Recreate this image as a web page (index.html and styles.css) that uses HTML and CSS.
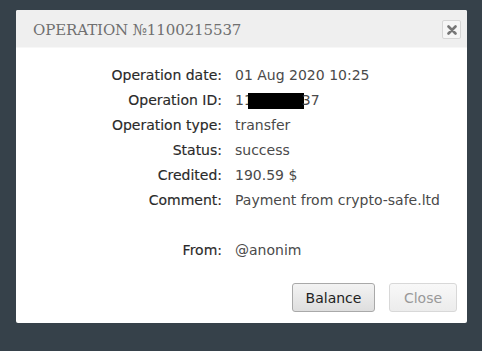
FILE: index.html
```html
<!DOCTYPE html>
<html>
<head>
<meta charset="utf-8">
<link rel="stylesheet" href="styles.css">
</head>
<body>
<div class="modal">
  <div class="header">
    <span class="title">OPERATION №1100215537</span>
    <span class="x-btn"><svg width="10" height="10" viewBox="0 0 10 10"><path d="M1.5 1.5 L8.5 8.5 M8.5 1.5 L1.5 8.5" stroke="#777" stroke-width="2.6" stroke-linecap="round"/></svg></span>
  </div>
  <div class="body">
    <div class="grid">
      <div class="lbl">Operation date:</div><div class="val">01 Aug 2020 10:25</div>
      <div class="lbl">Operation ID:</div><div class="val">11<span class="redact"></span>37</div>
      <div class="lbl">Operation type:</div><div class="val">transfer</div>
      <div class="lbl">Status:</div><div class="val">success</div>
      <div class="lbl">Credited:</div><div class="val">190.59 $</div>
      <div class="lbl">Comment:</div><div class="val">Payment from crypto-safe.ltd</div>
      <div class="lbl"></div><div class="val"></div>
      <div class="lbl">From:</div><div class="val">@anonim</div>
    </div>
    <div class="footer">
      <button class="btn">Balance</button>
      <button class="btn light">Close</button>
    </div>
  </div>
</div>
</body>
</html>
```
FILE: styles.css
```css
html, body { margin: 0; padding: 0; }
body {
  background: #36414a;
  width: 482px;
  height: 351px;
  overflow: hidden;
  padding: 10px 0 0 16px;
  box-sizing: border-box;
}
.modal {
  width: 451px;
  height: 313px;
  background: #fff;
  border-radius: 2px;
  display: flex;
  flex-direction: column;
}
.header {
  height: 37px;
  background: #efefef;
  border-bottom: 1px solid #f7f7f7;
  display: flex;
  align-items: center;
  justify-content: space-between;
  padding: 0 6px 0 17px;
  border-radius: 2px 2px 0 0;
}
.title {
  font-family: "DejaVu Serif", serif;
  font-size: 15px;
  color: #707070;
  letter-spacing: -0.1px;
  font-weight: normal;
  padding-top: 2px;
}
.x-btn {
  width: 17px;
  height: 17px;
  border: 1px solid #d6d6d6;
  border-radius: 2px;
  background: #f6f6f6;
  display: flex;
  align-items: center;
  justify-content: center;
  margin-top: 2px;
}
.body {
  flex: 1;
  display: flex;
  flex-direction: column;
  padding: 15px 10px 10px 0;
}
.grid {
  display: grid;
  grid-template-columns: 206px 1fr;
  grid-auto-rows: 25px;
  column-gap: 13px;
  font-family: "DejaVu Sans", sans-serif;
  font-size: 14px;
}
.lbl {
  text-align: right;
  color: #2a2a2a;
  line-height: 25px;
  -webkit-text-stroke: 0.15px #2a2a2a;
}
.val {
  color: #4a4a4a;
  line-height: 25px;
  display: flex;
  align-items: center;
}
.redact {
  display: inline-block;
  width: 56px;
  height: 16px;
  margin-left: -5px;
  margin-right: -2px;
  background: #000;
}
.footer {
  margin-top: auto;
  display: flex;
  justify-content: flex-end;
  gap: 14px;
  padding-bottom: 1px;
}
.btn {
  font-family: "DejaVu Sans", sans-serif;
  font-size: 14px;
  color: #222;
  height: 29px;
  width: 83px;
  border: 1px solid #a9a9a9;
  border-radius: 3px;
  background: linear-gradient(#f3f3f3, #dedede);
  padding: 0;
}
.btn.light {
  width: 68px;
  color: #999;
  border-color: #d8d8d8;
  background: linear-gradient(#f8f8f8, #ececec);
}
```
